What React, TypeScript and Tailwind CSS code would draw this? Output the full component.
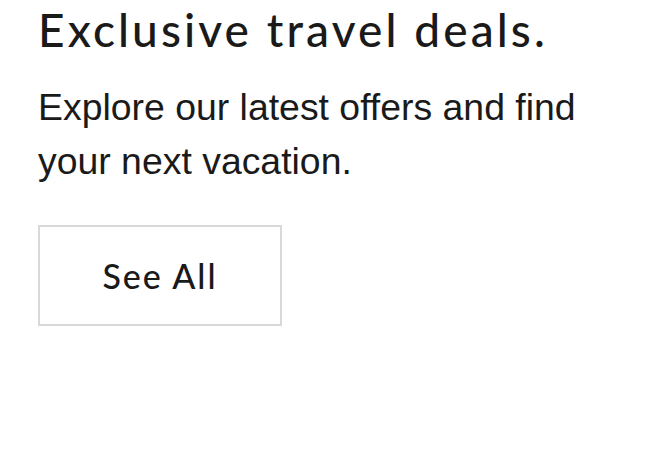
import React from 'react';

export default function App() {
    return (
        <div className="w-[660px] h-[460px] bg-white text-[#1a1a1a] overflow-hidden">
            <div className="pl-[38px] pt-[2px] flex flex-col items-start">
                <h1 className="font-['Lato',sans-serif] font-medium text-[46px] leading-[56px] tracking-[3.1px]">
                    Exclusive travel deals.
                </h1>
                <p className="mt-[22px] w-[570px] font-['Liberation_Sans',Arial,sans-serif] text-[37.4px] leading-[54px]">
                    Explore our latest offers and find your next vacation.
                </p>
                <button className="mt-[37px] w-[244px] h-[101px] border-2 border-[#d9d9d9] font-['Lato',sans-serif] font-medium text-[34px] tracking-[2px]">
                    See All
                </button>
            </div>
        </div>
    );
}
